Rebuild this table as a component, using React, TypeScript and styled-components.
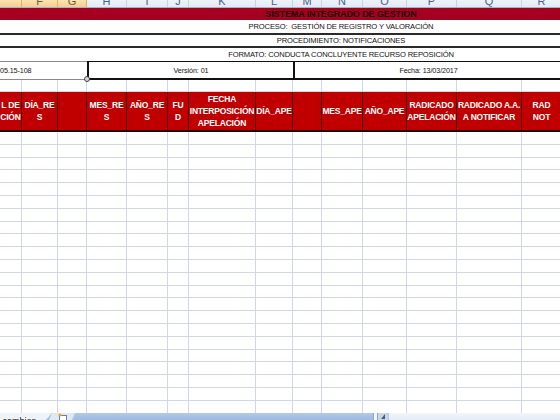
import React from "react";
import styled, { createGlobalStyle } from "styled-components";

const GlobalStyle = createGlobalStyle`
  html, body { margin: 0; padding: 0; background: #ffffff; }
  body { font-family: "Liberation Sans", Arial, sans-serif; }
  * { box-sizing: border-box; }
`;

const COLS = "22px 36px 29px 40px 41px 21px 67px 37px 29px 41px 44px 50px 65px 40px";
const LETTERS = ["", "F", "G", "H", "I", "J", "K", "L", "M", "N", "O", "P", "Q", "R"];
const SELECTED = [0, 1, 2];

const Sheet = styled.div`
  width: 560px;
  height: 420px;
  overflow: hidden;
  display: flex;
  flex-direction: column;
  background: #ffffff;
  position: relative;
`;

const ColHeaderRow = styled.div`
  display: grid;
  grid-template-columns: ${COLS};
  height: 8px;
  flex: none;
  border-bottom: 1px solid #9eb6ce;
`;

const ColHeaderCell = styled.div<{ $sel?: boolean }>`
  height: 7px;
  overflow: hidden;
  display: flex;
  align-items: flex-end;
  justify-content: center;
  border-right: 1px solid ${(p) => (p.$sel ? "#e0b45a" : "#c5d3e3")};
  background: ${(p) =>
    p.$sel ? "linear-gradient(#fbe2b4, #f6cf8a)" : "linear-gradient(#eef3fa, #e2eaf5)"};
  color: ${(p) => (p.$sel ? "#6b5a3a" : "#4d6185")};
  font-family: "Liberation Sans", Arial, sans-serif;
  font-size: 11px;
  line-height: 11px;
`;

const TitleBand = styled.div`
  height: 12px;
  flex: none;
  background: #a50021;
  display: flex;
  align-items: center;
  justify-content: center;
  padding-left: 122px;
  color: #1a0006;
  font-weight: bold;
  font-size: 9px;
  letter-spacing: -0.1px;
`;

const InfoLine = styled.div<{ $h: number; $border: string }>`
  height: ${(p) => p.$h}px;
  flex: none;
  display: flex;
  align-items: center;
  justify-content: center;
  padding-left: 122px;
  border-bottom: ${(p) => p.$border};
  color: #111;
  font-size: 7.6px;
  letter-spacing: -0.15px;
  white-space: nowrap;
`;

const MetaRow = styled.div`
  display: grid;
  grid-template-columns: 87px 206px 269px;
  height: 19px;
  flex: none;
  position: relative;
`;

const MetaCell = styled.div<{ $first?: boolean }>`
  display: flex;
  align-items: center;
  justify-content: ${(p) => (p.$first ? "flex-start" : "center")};
  font-size: 7.2px;
  color: #111;
  white-space: nowrap;
  overflow: hidden;
  border-top: 1px solid ${(p) => (p.$first ? "#8a8a8a" : "#111")};
  border-bottom: ${(p) => (p.$first ? "1px solid #8a8a8a" : "2px solid #111")};
  border-left: ${(p) => (p.$first ? "none" : "2px solid #111")};
  letter-spacing: -0.1px;
`;

const FillHandle = styled.div`
  position: absolute;
  left: 84px;
  top: 15px;
  width: 6px;
  height: 6px;
  border-radius: 50%;
  background: #d8d8d8;
  border: 1px solid #444;
`;

const GridRow = styled.div<{ $h: number }>`
  display: grid;
  grid-template-columns: ${COLS};
  height: ${(p) => p.$h}px;
  flex: none;
`;

const GridCell = styled.div`
  border-right: 1px solid #d0d6e8;
  border-bottom: 1px solid #d0d6e8;
`;

const HeadRow = styled.div`
  display: grid;
  grid-template-columns: ${COLS};
  height: 40px;
  flex: none;
  border-bottom: 2px solid #220000;
`;

const HeadCell = styled.div`
  background: #c00000;
  border-right: 1px solid #4a0000;
  color: #ffffff;
  font-family: "Liberation Sans", Arial, sans-serif;
  font-weight: bold;
  font-size: 8.5px;
  letter-spacing: -0.2px;
  line-height: 12px;
  display: flex;
  align-items: center;
  justify-content: center;
  text-align: center;
  overflow: hidden;
  white-space: nowrap;
`;

const Body = styled.div`
  flex: 1;
  overflow: hidden;
  display: flex;
  flex-direction: column;
`;

const BottomBar = styled.div`
  height: 7px;
  flex: none;
  display: flex;
  overflow: hidden;
  background: #a9c2e2;
`;

const SheetTab = styled.div`
  width: 52px;
  background: #eef3fa;
  font-size: 9px;
  color: #222;
  line-height: 12px;
  padding-top: 2px;
  white-space: nowrap;
  overflow: hidden;
  clip-path: polygon(0 0, 100% 0, 88% 100%, 0 100%);
`;

const InsertTab = styled.div`
  width: 26px;
  margin-left: -3px;
  background: #dfe8f4;
  clip-path: polygon(12% 0, 100% 0, 88% 100%, 0 100%);
  display: flex;
  align-items: flex-start;
  padding-left: 8px;
`;

const TabStrip = styled.div`
  flex: 1;
  background: linear-gradient(#b3c9e6, #9db9df);
`;

const Splitter = styled.div`
  width: 5px;
  background: #f4f6fa;
  border-left: 1px solid #8aa6cc;
  border-right: 1px solid #8aa6cc;
`;

const ScrollArrow = styled.div`
  width: 10px;
  background: #c8d6ea;
  display: flex;
  justify-content: center;
`;

const ScrollTrack = styled.div`
  width: 172px;
  background: linear-gradient(#f3f6fb, #e3ebf5);
  border-left: 1px solid #b7c7de;
`;

const headers: React.ReactNode[] = [
  <>L DE<br />CIÓN</>,
  <>DÍA_RE<br />S</>,
  "",
  <>MES_RE<br />S</>,
  <>AÑO_RE<br />S</>,
  <>FU<br />D</>,
  <>FECHA<br />INTERPOSICIÓN<br />APELACIÓN</>,
  "DÍA_APE",
  "",
  "MES_APE",
  "AÑO_APE",
  <>RADICADO<br />APELACIÓN</>,
  <>RADICADO A.A.<br />A NOTIFICAR</>,
  <>RAD<br />NOT</>,
];

const bodyRows = Array.from({ length: 23 });

export default function App() {
  return (
    <Sheet>
      <GlobalStyle />
      <ColHeaderRow>
        {LETTERS.map((l, i) => (
          <ColHeaderCell key={i} $sel={SELECTED.includes(i)}>
            <span>{l}</span>
          </ColHeaderCell>
        ))}
      </ColHeaderRow>
      <TitleBand>SISTEMA INTEGRADO DE GESTION</TitleBand>
      <InfoLine $h={15} $border="2px solid #2a2a2a">PROCESO:&nbsp; GESTIÓN DE REGISTRO Y VALORACIÓN</InfoLine>
      <InfoLine $h={13} $border="2px solid #2a2a2a">PROCEDIMIENTO: NOTIFICACIONES</InfoLine>
      <InfoLine $h={13} $border="none">FORMATO: CONDUCTA CONCLUYENTE RECURSO REPOSICIÓN</InfoLine>
      <MetaRow>
        <MetaCell $first>05.15-108</MetaCell>
        <MetaCell>Versión: 01</MetaCell>
        <MetaCell>Fecha: 13/03/2017</MetaCell>
        <FillHandle />
      </MetaRow>
      <GridRow $h={12}>
        {LETTERS.map((_, i) => (
          <GridCell key={i} />
        ))}
      </GridRow>
      <HeadRow>
        {headers.map((h, i) => (
          <HeadCell key={i}>
            <div>{h}</div>
          </HeadCell>
        ))}
      </HeadRow>
      <Body>
        {bodyRows.map((_, r) => (
          <GridRow key={r} $h={12.8}>
            {LETTERS.map((_, i) => (
              <GridCell key={i} />
            ))}
          </GridRow>
        ))}
      </Body>
      <BottomBar>
        <SheetTab>&nbsp;cambios</SheetTab>
        <InsertTab>
          <svg width="11" height="7" viewBox="0 0 11 7">
            <rect x="2.5" y="2.5" width="7" height="6" fill="#ffffff" stroke="#6b7f9e" />
            <circle cx="3" cy="2" r="1.6" fill="#f0a030" />
          </svg>
        </InsertTab>
        <TabStrip />
        <Splitter />
        <ScrollArrow>
          <svg width="6" height="7" viewBox="0 0 6 7">
            <path d="M5 1 L1 6 L5 6 Z" fill="#4a5d7c" />
          </svg>
        </ScrollArrow>
        <ScrollTrack />
      </BottomBar>
    </Sheet>
  );
}
